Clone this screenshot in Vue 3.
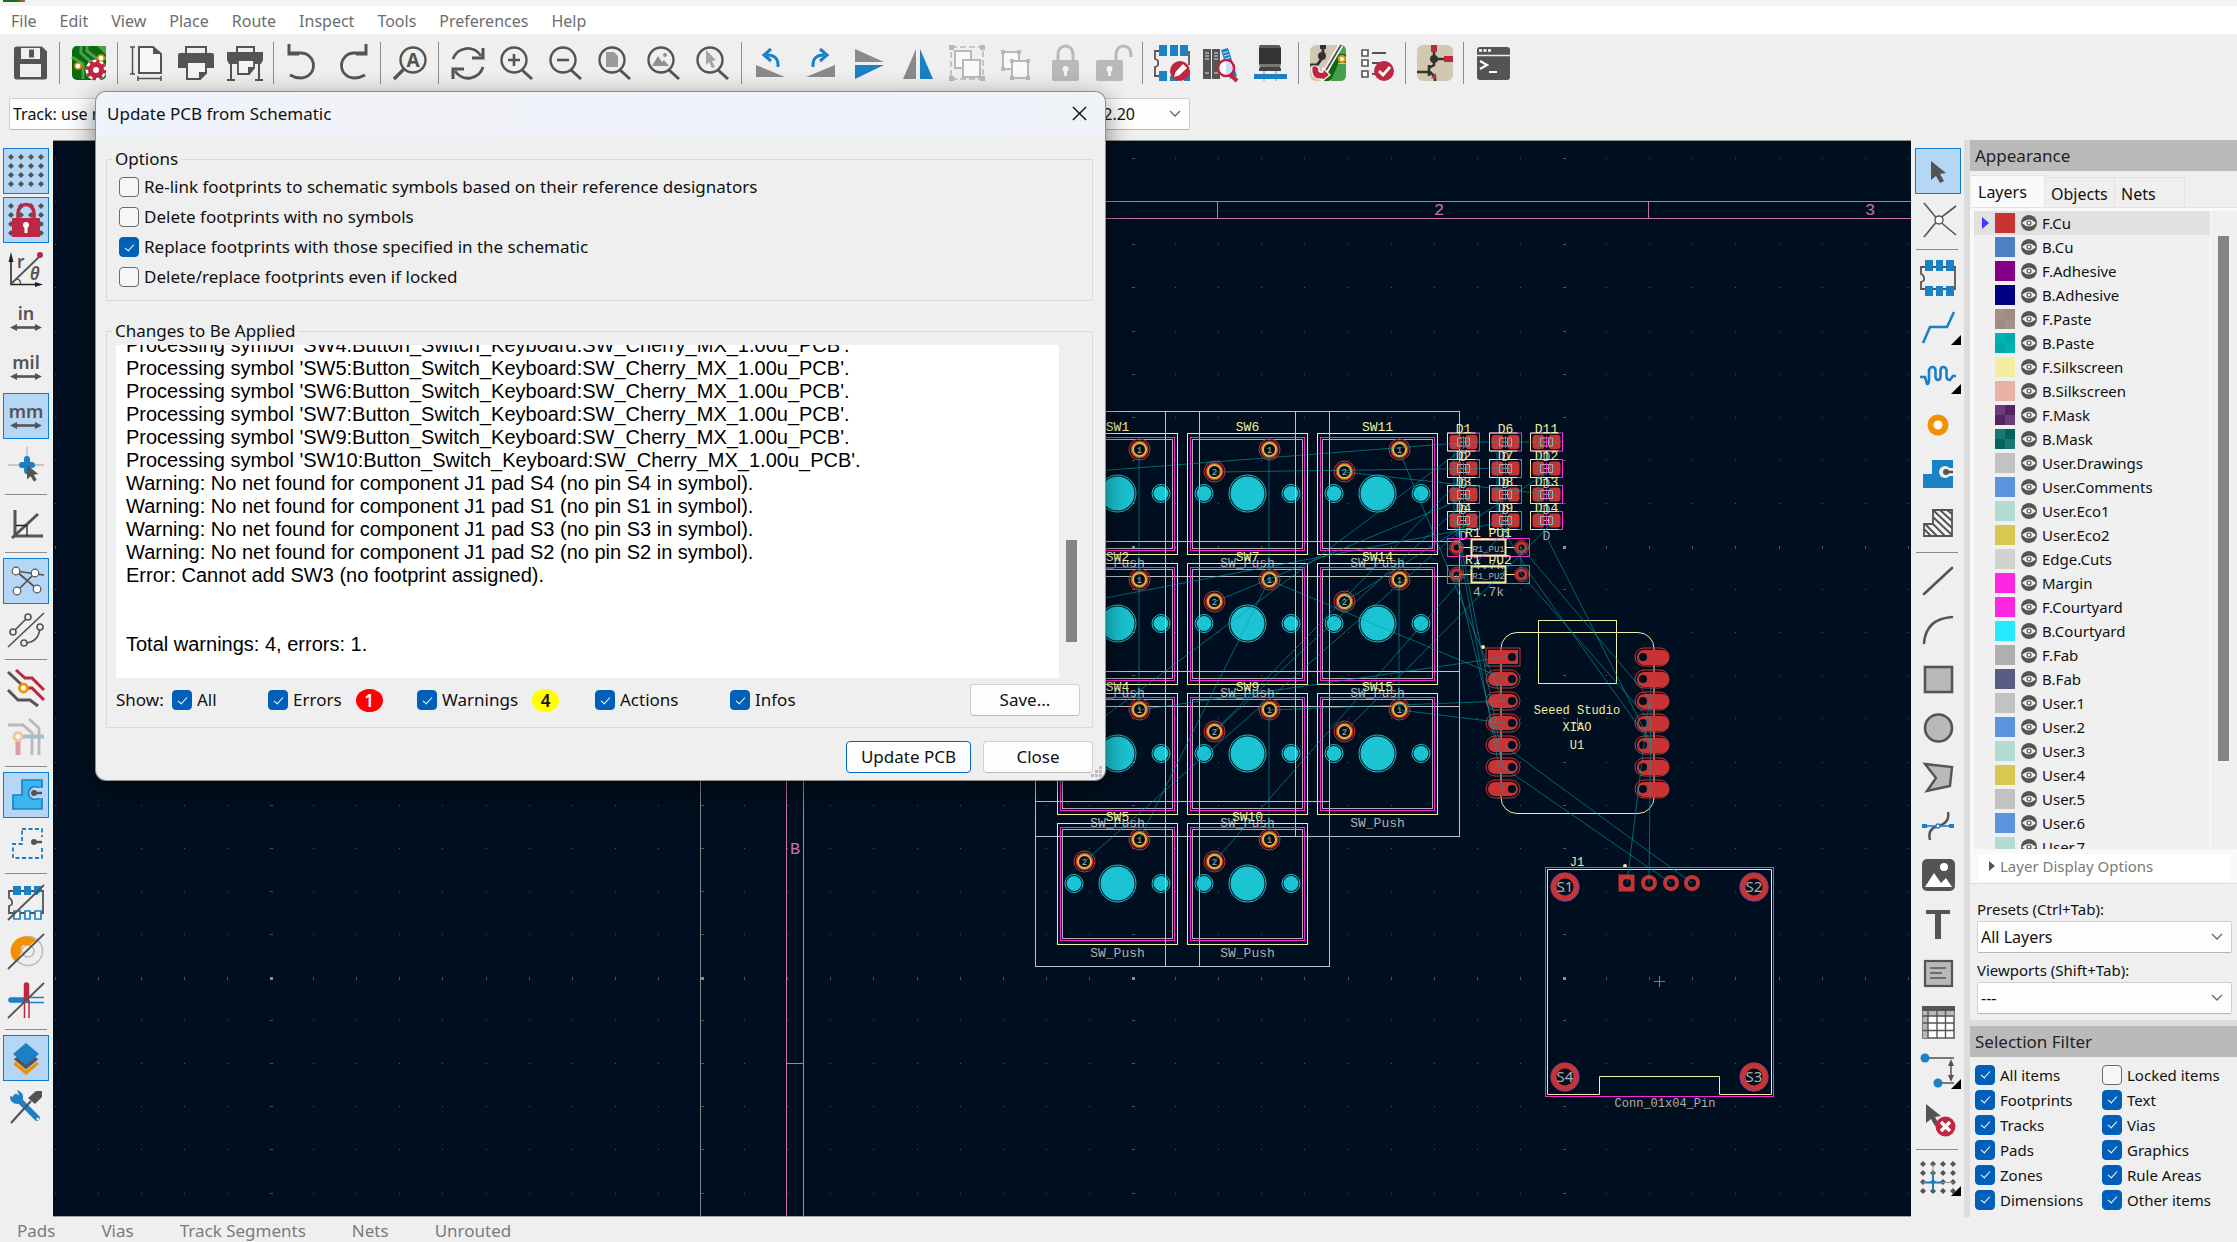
<script setup>
import { ref } from 'vue'

const D = '#545454', B = '#1a81c4', R = '#bf2641', G = '#b9b9b9', O = '#f29100'

const lens = (inner) =>
  `<circle cx="15" cy="15" r="12.500" fill="none" stroke="${D}" stroke-width="2.400"/><path d="M23 25L33 34" stroke="${D}" stroke-width="3"/>${inner}`
const dots = [3, 13, 23, 33].flatMap((x) => [4, 13, 22, 31].map((y) =>
  `<path d="M${x - 3} ${y}L${x} ${y - 3}L${x + 3} ${y}L${x} ${y + 3}Z" fill="${D}"/>`)).join('')
const arrows = `<path d="M2 27.500L9 24V31ZM34 27.500L27 24V31Z" fill="${D}"/><path d="M6 27.500H30" stroke="${D}" stroke-width="2.600"/>`
const unit = (t) => `<text x="18" y="20" text-anchor="middle" font-family="Noto Sans, sans-serif" font-weight="600" font-size="18" fill="${D}">${t}</text>${arrows}`
const chip = `<path d="M1 7H35V29H1V22Q5 21 4 18Q4 15 1 14Z" fill="none" stroke="${D}" stroke-width="1.800"/>`
const strike = `<path d="M0 36L36 1" stroke="${D}" stroke-width="1.800"/>`
const zoneShape = 'M12 4H33V32H3V18H12Z'
const cursor = (x, y) => `<path transform="translate(${x} ${y})" d="M0 0L15 12L9 13L13 20L9 22L5 15L0 19Z" fill="${D}"/>`
const corner = '<path d="M31 36H41V26Z" fill="#000"/>'

const icons = {
  save: `<path d="M1 4Q1 1.500 3.500 1.500H29L34 6.500V32Q34 34.500 31.500 34.500H3.500Q1 34.500 1 32Z" fill="${D}"/><path d="M8 3H27V14H8ZM7 19H28V32H7Z" fill="#efefef"/><path d="M16 4.500H21V12.500H16Z" fill="${D}"/>`,
  board: `<rect x="1" y="1" width="34" height="34" rx="5" fill="#0a6b0d"/><path d="M10 1V8L20 17V26M16 1V6L25 13H35M1 12L12 19V34" fill="none" stroke="#48a04c" stroke-width="3"/><path d="M26 1H35V10Z" fill="#48a04c"/><circle cx="7" cy="21" r="3" fill="#fff" stroke="${O}" stroke-width="1.500"/><circle cx="30" cy="13" r="3" fill="#fff" stroke="${O}" stroke-width="1.500"/><circle cx="25" cy="25" r="10.500" fill="#fff"/><circle cx="25" cy="25" r="5.500" fill="none" stroke="${R}" stroke-width="5"/><circle cx="25" cy="25" r="8.500" fill="none" stroke="${R}" stroke-width="3.500" stroke-dasharray="3.400 3.275"/>`,
  page: `<path d="M10 2H24L32 9V28H10Z" fill="#f6f6f6" stroke="${D}" stroke-width="2"/><path d="M24 2V9H32Z" fill="${D}"/><path d="M1 2H6M1 29H6M3.500 2V29M9 31V36M32 31V36M9 33.500H32" stroke="${D}" stroke-width="1.500"/>`,
  print: `<path d="M8 2H28V9H8Z" fill="#efefef" stroke="${D}" stroke-width="2"/><path d="M2 8H34Q36 8 36 10V23H28V16H8V23H0V10Q0 8 2 8Z" fill="${D}"/><path d="M9 17H28V28L22 34H9Z" fill="#f4f4f4" stroke="${D}" stroke-width="2"/><path d="M28 27L21 35V27Z" fill="${D}"/>`,
  plot: `<path d="M10 2H27V8H10Z" fill="#efefef" stroke="${D}" stroke-width="2"/><path d="M0 7H36V15L34 19H2L0 15Z" fill="${D}"/><path d="M4 19V34M32 19V34M0 35H8M28 35H36" stroke="${D}" stroke-width="2"/><path d="M11 15H27V23L22 29H11Z" fill="#f4f4f4" stroke="${D}" stroke-width="1.800"/><path d="M27 22L21 30V22Z" fill="${D}"/>`,
  undo: `<path d="M5 8H16A12.500 12.500 0 0 1 16 33Q10 33 5 30" fill="none" stroke="${D}" stroke-width="2.800"/><path d="M4 -1V9H14" fill="none" stroke="${D}" stroke-width="3"/>`,
  redo: `<path d="M31 8H20A12.500 12.500 0 0 0 20 33Q26 33 31 30" fill="none" stroke="${D}" stroke-width="2.800"/><path d="M32 -1V9H22" fill="none" stroke="${D}" stroke-width="3"/>`,
  find: `<circle cx="21" cy="15" r="12.500" fill="none" stroke="${D}" stroke-width="2.400"/><path d="M12 24L2 34" stroke="${D}" stroke-width="3.200"/><text x="21" y="22" text-anchor="middle" font-family="Noto Sans, sans-serif" font-weight="700" font-size="19" fill="${D}">A</text>`,
  refresh: `<path d="M3 14A15.500 15.500 0 0 1 31 11M33 22A15.500 15.500 0 0 1 5 26" fill="none" stroke="${D}" stroke-width="2.800"/><path d="M33 3V13H22M3 34V24H14" fill="none" stroke="${D}" stroke-width="3"/>`,
  zoomin: lens(`<path d="M9 15H21M15 9V21" stroke="${D}" stroke-width="2.600"/>`),
  zoomout: lens(`<path d="M9 15H21" stroke="${D}" stroke-width="2.600"/>`),
  zoomfit: lens('<path d="M9 7H17L21 11V22H9Z" fill="#9b9b9b"/>'),
  zoomobj: lens('<path d="M6 21L12 11L16 17L18 15L23 21Z" fill="#8f8f8f"/><circle cx="19" cy="10" r="2" fill="#8f8f8f"/>'),
  zoomsel: lens('<path d="M11 5L21 15L17 16L20 22L17 23L14 17L11 20Z" fill="#a5a5a5"/>'),
  rotl: `<path d="M3 20L32 32H3Z" fill="#8a8a8a"/><path d="M25 22Q26 10 14 10" fill="none" stroke="${B}" stroke-width="3"/><path d="M18 4L11 10L18 16" fill="none" stroke="${B}" stroke-width="3"/>`,
  rotr: `<path d="M33 20L4 32H33Z" fill="#8a8a8a"/><path d="M11 22Q10 10 22 10" fill="none" stroke="${B}" stroke-width="3"/><path d="M18 4L25 10L18 16" fill="none" stroke="${B}" stroke-width="3"/>`,
  flipv: `<path d="M4 4L33 17H4Z" fill="#8a8a8a"/><path d="M4 20H33L4 34Z" fill="${B}"/>`,
  fliph: `<path d="M16 4V34H3Z" fill="#8a8a8a"/><path d="M20 4V34H33Z" fill="${B}"/>`,
  group: `<rect x="2" y="2" width="32" height="32" fill="none" stroke="${G}" stroke-width="1.500" stroke-dasharray="6 3"/><path d="M0 0H5V5H0ZM31 0H36V5H31ZM0 31H5V36H0ZM31 31H36V36H31Z" fill="${G}"/><rect x="6" y="6" width="16" height="17" fill="#fafafa" stroke="${G}" stroke-width="2"/><rect x="14" y="15" width="17" height="17" fill="#fafafa" stroke="${G}" stroke-width="2"/>`,
  ungroup: `<g stroke="${G}" stroke-width="2" fill="#fafafa"><rect x="5" y="7" width="16" height="17"/><rect x="14" y="16" width="16" height="17"/></g><path d="M3 5H7V9H3ZM19 5H23V9H19ZM3 22H7V26H3ZM12 14H16V18H12ZM28 14H32V18H28ZM12 31H16V35H12ZM28 31H32V35H28Z" fill="${G}"/>`,
  lock: `<path d="M11 17V9A7.500 8 0 0 1 26 9V17" fill="none" stroke="${G}" stroke-width="3"/><rect x="5" y="15" width="27" height="21" rx="2" fill="${G}"/><circle cx="18.500" cy="24" r="3" fill="#f2f2f2"/><path d="M17 25H20V31H17Z" fill="#f2f2f2"/>`,
  unlock: `<path d="M20 17V9A7.500 8 0 0 1 35 9V12" fill="none" stroke="${G}" stroke-width="3"/><rect x="0" y="15" width="27" height="21" rx="2" fill="${G}"/><circle cx="13.500" cy="24" r="3" fill="#f2f2f2"/><path d="M12 25H15V31H12Z" fill="#f2f2f2"/>`,
  fpedit: `<path d="M5 6H1V14Q5 15 4 18Q5 21 1 22V31H5M35 6V20" fill="none" stroke="${D}" stroke-width="1.800"/><path d="M5 0H13V11H5ZM16 0H24V11H16ZM26 0H34V11H26ZM5 26H13V36H5ZM16 31H24V36H16ZM30 26H36V36H30Z" fill="${B}"/><circle cx="26" cy="26" r="10" fill="${R}"/><path d="M20 32L21.500 27L29 19L33 23L25 30.500Z" fill="#fff"/>`,
  fplib: `<path d="M0 4H8V34H0ZM9 4H17V34H9Z" fill="${D}"/><path d="M2 8H6M2 11H6M2 14H6M2 28H6M11 8H15M11 11H15M11 14H15M11 28H15" stroke="#ddd" stroke-width="1.200"/><path d="M18 5L25 3L34 31L27 34Z" fill="${B}"/><path d="M20 8L25 6.500M21 11L26 9.500M22 14L27 12.500" stroke="#cfe6f5" stroke-width="1"/><path d="M28 30L34 36" stroke="${R}" stroke-width="4"/><circle cx="23" cy="23" r="8" fill="#fff" stroke="${R}" stroke-width="2.600"/><path d="M23 17V29A6 6 0 0 0 23 17Z" fill="#c5dff0"/>`,
  view3d: `<path d="M8 0H27L29 3V19H7V3Z" fill="#333"/><path d="M7 3L8 0H27L29 3Z" fill="#5a5a5a"/><path d="M7 19H29L28 23H8Z" fill="#777"/><path d="M8 22H28L29 24V26H7V24Z" fill="#444"/><path d="M12 26V30M24 26V30M12 34V36M24 34V36" stroke="#b9b9b9" stroke-width="1.800"/><path d="M2 29H35V34H2Z" fill="${B}"/>`,
  update: `<rect x="0" y="0" width="36" height="36" rx="6" fill="#d2c7b1"/><path d="M30 3Q36 4 36 8V18H28V22L22 34L19 36H14Z" fill="#0a6b0d"/><path d="M32 0Q36 1 36 6V9H27ZM36 19V30Q36 36 30 36H21L26 24L28 19Z" fill="#48a04c"/><path d="M13 0V10M0 20H7L13 12" fill="none" stroke="#333" stroke-width="2.800"/><path d="M10 0H16V4H10Z" fill="#333"/><circle cx="12" cy="11" r="4" fill="#333"/><circle cx="32" cy="14" r="3" fill="#fff" stroke="${O}" stroke-width="2.200"/><path d="M31 0L15 27" stroke="#fff" stroke-width="5"/><path d="M31 0L15 27" stroke="${D}" stroke-width="2"/><path d="M2 21Q0 35 12 34V36L20 30L13 23V27Q8 28 9 24L7 21Z" fill="${R}" stroke="#fff" stroke-width="1.200"/>`,
  drc: `<path d="M3 5H9V11H3ZM3 15H9V21H3ZM3 26H9V32H3Z" fill="#fff" stroke="${D}" stroke-width="1.600"/><path d="M13 8H27M13 18H20M13 29H16" stroke="${D}" stroke-width="1.800"/><circle cx="25" cy="26" r="10" fill="${R}"/><path d="M20 26L24 30L31 22" fill="none" stroke="#fff" stroke-width="2.800"/>`,
  schem: `<rect x="0" y="0" width="36" height="36" rx="6" fill="#d2c7b1"/><path d="M17 6V14H28M17 14V20L12 23V27H0M12 20V31M12 26L18 32V36" fill="none" stroke="#333" stroke-width="2.600"/><circle cx="17" cy="14" r="4" fill="#333"/><path d="M14 0H20V7H14ZM27 11H36V17H27ZM14 33L19 28V34Z" fill="${R}"/>`,
  console: `<rect x="2" y="2" width="33" height="33" rx="3" fill="${D}"/><path d="M2 10.500H35" stroke="#efefef" stroke-width="1.400"/><path d="M4 5.500H16" stroke="#fff" stroke-width="2.400" stroke-dasharray="3 1.500"/><path d="M5 16L12 20L5 24M14 27H22" fill="none" stroke="#fff" stroke-width="2.200"/>`,
  grid: dots,
  gridlock: `${dots}<path d="M10 18V11A8 8.500 0 0 1 26 11V18" fill="none" stroke="${R}" stroke-width="3.500"/><rect x="4" y="16" width="28" height="19" rx="1" fill="${R}"/><circle cx="18" cy="23" r="3" fill="#fff"/><path d="M16.500 24H19.500V31H16.500Z" fill="#fff"/>`,
  polar: `<path d="M3 5V33.500H31" fill="none" stroke="#222" stroke-width="1.500"/><path d="M3 1L5.500 11H0.500ZM35 33.500L27 31V36Z" fill="#222"/><path d="M3 33L31 6" stroke="${D}" stroke-width="1.800"/><path d="M9 28Q13 29 12.500 33" fill="none" stroke="${D}" stroke-width="1.300"/><circle cx="32" cy="4" r="3" fill="${R}"/><text x="9" y="17" font-family="Noto Sans, sans-serif" font-weight="600" font-size="17" fill="${D}">r</text><text x="22" y="29" font-family="Noto Sans, sans-serif" font-style="italic" font-weight="600" font-size="17" fill="${D}">θ</text>`,
  inch: unit('in'), mil: unit('mil'), mm: unit('mm'),
  cross: `<path d="M0 18H36M19 0V18" stroke="${G}" stroke-width="1.300"/><path d="M14 18H24M19 12V24" stroke="${B}" stroke-width="6" stroke-linecap="round"/><path transform="translate(19 18) scale(.75)" d="M0 0L15 12L9 13L13 20L9 22L5 15L0 19Z" fill="${D}"/>`,
  angle: `<path d="M7 5V31H35" fill="none" stroke="${D}" stroke-width="3"/><path d="M4 33L30 9" stroke="${D}" stroke-width="3"/><path d="M8 20.500H19V31" fill="none" stroke="#222" stroke-width="1.300"/>`,
  rats: `<path d="M8 8L28 11L36 12M8 8L29 26M27 10L9 28" stroke="${D}" stroke-width="1.700" fill="none"/><g fill="#fff" stroke="${D}" stroke-width="1.200"><circle cx="8" cy="8" r="3.800"/><circle cx="27" cy="10" r="3.800"/><circle cx="29" cy="26" r="3.800"/><circle cx="9" cy="28" r="3.800"/></g>`,
  curved: `<path d="M0 35L36 1M5 20L20 5M32 15Q31 31 16 31" fill="none" stroke="${D}" stroke-width="1.700"/><g fill="#efefef" stroke="${D}" stroke-width="1.600"><circle cx="5" cy="20" r="3"/><circle cx="20" cy="5" r="3"/><circle cx="32" cy="15" r="3"/><circle cx="16" cy="31" r="3"/></g>`,
  tracks: `<path d="M0 2L15 16M0 20L10 30H22L30 36" fill="none" stroke="${D}" stroke-width="3"/><path d="M8 0L17 8H24L36 20M17 18H24L36 30" fill="none" stroke="${R}" stroke-width="3"/><circle cx="15.500" cy="18" r="4" fill="#fff" stroke="${O}" stroke-width="2.800"/>`,
  dimtracks: `<g opacity=".4"><path d="M10 20V36" stroke="${R}" stroke-width="5"/><path d="M12 17.500H36" stroke="${B}" stroke-width="4"/><circle cx="10" cy="17.500" r="4" fill="#fff" stroke="${O}" stroke-width="2.800"/></g><path d="M0 6H15L24 14V36M21 0L31 9V36" fill="none" stroke="${G}" stroke-width="2.800"/>`,
  zonefill: `<path d="M14 3H34V32H5V18H14Z" fill="#3bb5ee" stroke="${B}" stroke-width="1.700"/><circle cx="27" cy="16" r="6.500" fill="#b5d6f4" stroke="${B}" stroke-width="1.700"/><path d="M28 11H36V21H28Z" fill="#b5d6f4"/><circle cx="26" cy="16" r="3" fill="${D}"/><path d="M26 16H34" stroke="${D}" stroke-width="2.500"/>`,
  zoneline: `<path d="M14 3H34V32H5V18H14Z" fill="none" stroke="${B}" stroke-width="1.800" stroke-dasharray="4 2.500"/><path d="M28 11H36V21H28Z" fill="#efefef"/><circle cx="26" cy="16" r="3" fill="${D}"/><path d="M26 16H34" stroke="${D}" stroke-width="2.500"/>`,
  fpsketch: `${chip}<path d="M5 2H13V11H5ZM16 2H23V11H16ZM26 2H34V6L29 11H26Z" fill="${B}"/><path d="M6 27H12V35H6ZM17 27H22V35H17ZM27 27H33V35H27Z" fill="#fff" stroke="${B}" stroke-width="1.700"/>${strike}`,
  viasketch: `<circle cx="20" cy="18" r="14.500" fill="none" stroke="${G}" stroke-width="1.500"/><circle cx="20" cy="18" r="6" fill="none" stroke="${G}" stroke-width="1.500"/><path d="M8 29A15 14 0 1 1 28 7L22 12H15Q13 13 13 20Z" fill="${O}"/>${strike}`,
  tracksketch: `<path d="M3 18H18" stroke="${B}" stroke-width="5.500" stroke-linecap="round"/><path d="M20 15.500H36M18 20.500H36" stroke="${B}" stroke-width="1.500"/><path d="M18.500 3V17" stroke="${R}" stroke-width="5.500" stroke-linecap="round"/><path d="M16.500 18V36M21 18V36" stroke="${R}" stroke-width="1.500"/>${strike}`,
  layers: `<path d="M5 24L18 35L31 24L18 15Z" fill="${O}"/><path d="M5 19L18 30L31 19L18 11Z" fill="${D}" stroke="#b5d6f4" stroke-width="1"/><path d="M5 14L18 25L31 14L18 3Z" fill="${B}"/>`,
  tools: `<path d="M8 8L29 29" stroke="${B}" stroke-width="6" stroke-linecap="round"/><path d="M2 7Q2 15 10 15L15 11Q16 3 9 1L11 6L8 9L5 8Z" fill="${B}"/><circle cx="30" cy="30" r="1.500" fill="#efefef"/><path d="M3 34L23 12" stroke="${D}" stroke-width="2.200"/><path d="M20 9L28 2L34 2V8L27 15Z" fill="${D}"/>`,
  select: cursor(11, 8),
  net: `<path d="M4 1L18 18L36 4M18 18L36 33M18 18L4 35" fill="none" stroke="${D}" stroke-width="1.600"/><circle cx="19" cy="18" r="4" fill="#fff" stroke="${D}" stroke-width="1.400"/>`,
  fpadd: `${chip}<path d="M5 0H13V11H5ZM16 0H23V11H16ZM26 0H34V11H26ZM5 26H13V36H5ZM16 26H23V36H16ZM26 26H34V36H26Z" fill="${B}"/>`,
  route: `<path d="M3 34L10 18H27L34 3" fill="none" stroke="${B}" stroke-width="2.600"/>${corner}`,
  tune: `<path d="M0 19H5L7 26Q9 26 9 22V12Q10 9 12.500 9Q15 9 15.500 12V19Q16 22 18 22Q20 22 20.500 19V12Q21 9 23 9Q26 9 26.500 12V19Q27 22 30 22L33 18H36" fill="none" stroke="${B}" stroke-width="2.600"/>${corner}`,
  via: `<circle cx="18" cy="18" r="7.500" fill="#fff" stroke="${O}" stroke-width="6"/>`,
  zone: `<path d="${zoneShape}" fill="${B}"/><circle cx="25" cy="16" r="6" fill="#efefef"/><path d="M25 12H34V20H25Z" fill="#efefef"/><circle cx="26" cy="16" r="3" fill="${D}"/><path d="M26 16H33" stroke="${D}" stroke-width="2.500"/>`,
  rule: `<path d="M13 5H32V31H4V19H13Z" fill="#f4f4f4" stroke="${D}" stroke-width="1.800"/><path d="M4 24L11 31M5 19L17 31M13 19L25 31M13 12L32 30M13 5L32 23M20 5L32 16M27 5L32 9" stroke="${D}" stroke-width="2"/>`,
  line: `<path d="M4 31L32 5" stroke="${D}" stroke-width="2.600" stroke-linecap="round"/>`,
  arc: `<path d="M4 31Q6 7 32 5" fill="none" stroke="${D}" stroke-width="2.600" stroke-linecap="round"/>`,
  rect: `<rect x="5" y="6" width="27" height="25" fill="${G}" stroke="${D}" stroke-width="2.600"/>`,
  circle: `<circle cx="18.500" cy="18" r="13.500" fill="${G}" stroke="${D}" stroke-width="2.600"/>`,
  poly: `<path d="M5 5L32 8L30 27L7 32L16 19Z" fill="${G}" stroke="${D}" stroke-width="2.400"/>`,
  bezier: `<path d="M10 32Q7 21 18 18Q30 15 28 4" fill="none" stroke="${D}" stroke-width="2.400"/><path d="M4 18H32" stroke="${B}" stroke-width="1.600"/><path d="M2 16H7V20H2ZM29 16H34V20H29Z" fill="${B}"/><circle cx="18" cy="18" r="2" fill="#fff" stroke="${B}" stroke-width="1.300"/>`,
  image: `<rect x="2" y="2" width="33" height="32" rx="5" fill="${D}"/><path d="M5 30L14 16L21 26L26 21L32 30Z" fill="#fff"/><circle cx="24" cy="10" r="4" fill="#fff"/>`,
  text: `<path d="M6 4H30V8H21V33H15V8H6Z" fill="${D}"/>`,
  textbox: `<rect x="5" y="6" width="27" height="25" fill="${G}" stroke="${D}" stroke-width="2.200"/><path d="M10 13H26M10 18H22M10 23H26" stroke="${D}" stroke-width="1.600"/>`,
  table: `<rect x="3" y="3" width="31" height="31" fill="#fff" stroke="${D}" stroke-width="1.500"/><path d="M3 7H34V12H3ZM3 12H8V34H3Z" fill="${G}"/><path d="M3 12H34M3 19H34M3 26.500H34M8 7V34M17 7V34M25.500 7V34" stroke="${D}" stroke-width="1.400"/><path d="M2 2H35V7H2Z" fill="${D}"/>`,
  dim: `<path d="M5 5H34M18 30H34" stroke="${D}" stroke-width="1.500"/><path d="M31 9V27" stroke="${D}" stroke-width="1.500"/><path d="M31 6L34 13H28ZM31 29L34 22H28Z" fill="${D}"/><circle cx="5" cy="5" r="4.500" fill="${B}"/><circle cx="18" cy="30" r="4.500" fill="${B}"/>${corner}`,
  remove: `${cursor(6, 2)}<circle cx="25.500" cy="24.500" r="10" fill="${R}"/><path d="M21 20L30 29M30 20L21 29" stroke="#fff" stroke-width="3.500"/>`,
  origin: `${dots}<path d="M3 22.500H33M13 4V22" stroke="#999" stroke-width="1"/><path d="M5 22.500H22M13 14V31" stroke="${B}" stroke-width="2"/>${corner}`
}

const menus = ['File', 'Edit', 'View', 'Place', 'Route', 'Inspect', 'Tools', 'Preferences', 'Help']
const split = (s) => s.split(' ').map((name, i) => ({ key: i, name: name.replace('*', ''), on: name.endsWith('*'), sep: name === '|' }))
const topTools = split('save | board | page print plot | undo redo | find | refresh zoomin zoomout zoomfit zoomobj zoomsel | rotl rotr flipv fliph group ungroup lock unlock | fpedit fplib view3d | update drc | schem | console')
const leftTools = split('grid* gridlock* polar inch mil mm* cross | angle | rats* curved | tracks dimtracks | zonefill* zoneline | fpsketch viasketch tracksketch | layers* tools')
const rightTools = split('select* net | fpadd route tune via zone rule | line arc rect circle poly bezier image text textbox table dim remove | origin')

const layers = [
  ['F.Cu', '#c83434'], ['B.Cu', '#4d7fc4'], ['F.Adhesive', '#840084'], ['B.Adhesive', '#000084'],
  ['F.Paste', '#a59189', '#a08b82'], ['B.Paste', '#00b4b4', '#00aaaa'], ['F.Silkscreen', '#f2eda1'], ['B.Silkscreen', '#e8b2a7'],
  ['F.Mask', '#6d3b7b', '#54245f'], ['B.Mask', '#177a72', '#02645c'], ['User.Drawings', '#c2c2c2'], ['User.Comments', '#5994dc'],
  ['User.Eco1', '#b4dbd2'], ['User.Eco2', '#d8c852'], ['Edge.Cuts', '#d0d2cd'], ['Margin', '#ff26e2'],
  ['F.Courtyard', '#ff26e2'], ['B.Courtyard', '#26e9ff'], ['F.Fab', '#afafaf'], ['B.Fab', '#585d84'],
  ['User.1', '#c2c2c2'], ['User.2', '#5994dc'], ['User.3', '#b4dbd2'], ['User.4', '#d8c852'],
  ['User.5', '#c2c2c2'], ['User.6', '#5994dc'], ['User.7', '#b4dbd2']
].map(([name, color, alt]) => ({ name, color, alt: alt || color }))

const filters = ref([
  ['All items', true], ['Locked items', false], ['Footprints', true], ['Text', true], ['Tracks', true], ['Vias', true],
  ['Pads', true], ['Graphics', true], ['Zones', true], ['Rule Areas', true], ['Dimensions', true], ['Other items', true]
].map(([label, on]) => ({ label, on })))

const options = ref([
  { label: 'Re-link footprints to schematic symbols based on their reference designators', on: false },
  { label: 'Delete footprints with no symbols', on: false },
  { label: 'Replace footprints with those specified in the schematic', on: true },
  { label: 'Delete/replace footprints even if locked', on: false }
])
const shows = ref([
  { label: 'All', on: true }, { label: 'Errors', on: true, count: 1, kind: 'err' },
  { label: 'Warnings', on: true, count: 4, kind: 'warn' }, { label: 'Actions', on: true }, { label: 'Infos', on: true }
])
const log = [
  ...[4, 5, 6, 7, 9, 10].map((n) => `Processing symbol 'SW${n}:Button_Switch_Keyboard:SW_Cherry_MX_1.00u_PCB'.`),
  ...[4, 1, 3, 2].map((n) => `Warning: No net found for component J1 pad S${n} (no pin S${n} in symbol).`),
  'Error: Cannot add SW3 (no footprint assigned).', '', '', 'Total warnings: 4, errors: 1.'
]

/* board contents, in canvas units */
const cols = [1117.5, 1247.5, 1377.5], rows = [493.5, 623.5, 753.5, 883.5]
const switches = [
  ['SW1', 0, 0], ['SW6', 1, 0], ['SW11', 2, 0], ['SW2', 0, 1], ['SW7', 1, 1], ['SW14', 2, 1],
  ['SW4', 0, 2], ['SW9', 1, 2], ['SW15', 2, 2], ['SW5', 0, 3], ['SW10', 1, 3]
].map(([name, c, r]) => ({ name, x: cols[c], y: rows[r] }))
const diodes = [1463.5, 1505.5, 1546.5].flatMap((x, c) => [442, 468.5, 494.5, 520.5].map((y, r) => ({ name: 'D' + (c * 5 + r + 1), x, y })))
const resistors = [{ name: 'R1_PU1', y: 547.5 }, { name: 'R1_PU2', y: 574.5 }]
const pins = [657, 679, 701, 723, 745, 767, 789]
const gridDots = []
for (let i = -15; i <= 28; i++) {
  for (let j = -19; j <= 5; j++) {
    const mx = i % 10 === 0, my = j % 10 === 0
    gridDots.push({ x: Math.round(701 + i * 43.1), y: Math.round(977 + j * 43.1), w: mx ? 3 : 1, h: my ? 3 : 1, c: mx && my ? '#8c8f93' : '#50565e' })
  }
}
const nets = [
  'M1139 450V710', 'M1269 450V580', 'M1269 710V840', 'M1399 580V710',
  'M1084 472L1472 442', 'M1214 472L1514 468', 'M1344 472L1555 495',
  'M1084 602L1514 520', 'M1214 602L1472 495', 'M1344 602L1555 468', 'M1084 732L1472 442',
  'M1214 732L1472 495', 'M1214 732L1472 468', 'M1084 862L1472 520', 'M1214 862L1514 520', 'M1344 732L1555 520',
  'M1269 580L1505 679', 'M1139 840L1269 580', 'M1139 710L1505 657', 'M1269 710L1505 701', 'M1399 710L1505 723',
  'M1399 450L1503 701', 'M1454 442V520L1503 789', 'M1456 520L1500 745', 'M1456 574L1503 767',
  'M1497 442V520L1530 574L1652 745', 'M1538 442V520L1652 745', 'M1521 547V574L1652 723', 'M1521 547L1652 701',
  'M1472 442L1563 442', 'M1503 745L1692 883', 'M1503 767L1671 883', 'M1652 679L1627 883', 'M1651 701L1649 883'
]
const standoffs = [['S1', 1565, 887], ['S2', 1754, 887], ['S3', 1754, 1077], ['S4', 1565, 1077]]
</script>

<template>
  <div class="app">
    <div class="titlebar"><span class="appmark"></span></div>
    <nav class="menubar"><a v-for="m in menus" :key="m" href="#">{{ m }}</a></nav>

    <div class="toolbar">
      <template v-for="t in topTools" :key="t.key">
        <span v-if="t.sep" class="vsep"></span>
        <button v-else class="tool wide" :aria-label="t.name"><svg viewBox="0 0 36 36" v-html="icons[t.name]"></svg></button>
      </template>
    </div>
    <div class="toolbar second">
      <select class="combo track" aria-label="Track width"><option>Track: use netclass width</option></select>
      <button class="toggle" aria-label="Automatic width"></button>
      <span class="grow"></span>
      <select class="combo zoom" aria-label="Zoom"><option>Zoom 2.20</option></select>
    </div>

    <div class="body">
      <div class="side">
        <template v-for="t in leftTools" :key="t.key">
          <span v-if="t.sep" class="hsep"></span>
          <span v-else class="slot"><button class="tool" :class="{ on: t.on }" :aria-label="t.name"><svg viewBox="0 0 36 36" v-html="icons[t.name]"></svg></button></span>
        </template>
      </div>

      <main class="canvas">
        <svg class="board" viewBox="53 140 1858 1077" preserveAspectRatio="xMidYMid slice">
          <rect v-for="(d, i) in gridDots" :key="'g' + i" :x="d.x" :y="d.y" :width="d.w" :height="d.h" :fill="d.c" />
          <path d="M700.500 140V1217" class="page-edge" />
          <path d="M786.500 1217V201.500H1911M803.500 1217V218.500H1911M786.500 1063.500H803.500M1217.500 201V218M1648.500 201V218" class="sheet" />
          <g class="sheet-text"><text x="1439" y="215">2</text><text x="1870" y="215">3</text><text x="795" y="854">B</text></g>

          <g v-for="s in switches" :key="s.name" :transform="`translate(${s.x} ${s.y})`">
            <rect x="-82" y="-82" width="164" height="165" class="dwg" />
            <rect x="-60" y="-60" width="120" height="121" class="silk" />
            <rect x="-57" y="-56" width="114" height="113" class="court" />
            <rect x="-55" y="-54" width="110" height="109" class="fab" />
            <circle r="18.500" class="hole-ring" /><circle r="17" class="hole" />
            <circle cx="-43.500" r="9" class="hole-ring" /><circle cx="-43.500" r="7.500" class="hole" />
            <circle cx="43.500" r="9" class="hole-ring" /><circle cx="43.500" r="7.500" class="hole" />
            <g v-for="(p, i) in [[22, -44], [-33, -22]]" :key="i" :transform="`translate(${p[0]} ${p[1]})`">
              <circle r="10.500" class="pad-ring" /><circle r="9" class="pad" /><circle r="6.500" class="drill" />
              <text y="3" class="fabtext small">{{ i + 1 }}</text>
            </g>
            <text y="-63" class="silktext">{{ s.name }}</text>
            <text y="73" class="fabtext">SW_Push</text>
          </g>

          <g v-for="d in diodes" :key="d.name" :transform="`translate(${d.x} ${d.y})`">
            <rect x="-16" y="-9" width="32" height="18" class="court" />
            <path d="M12 -9H-16V9H12" class="silk" />
            <rect x="-14" y="-7" width="12" height="14" rx="3" class="pad" /><rect x="2" y="-7" width="12" height="14" rx="3" class="pad" />
            <path d="M-6 -4H6V4H-6ZM-3 0H3M2 -3V3" class="fab" /><path d="M0 -6V6" class="court" />
            <text y="-9" class="silktext">{{ d.name }}</text>
            <text y="19" class="fabtext">D</text>
          </g>

          <g v-for="r in resistors" :key="r.name" :transform="`translate(1488.500 ${r.y})`">
            <rect x="-41" y="-9" width="82" height="18" class="court" />
            <path d="M-27 0H-17M17 0H27" class="silk" />
            <rect x="-17" y="-8" width="34" height="16" class="silk thick" />
            <circle v-for="x in [-32, 33]" :key="x" :cx="x" r="7" class="pad-ring" />
            <circle v-for="x in [-32, 33]" :key="'p' + x" :cx="x" r="4.500" class="pad-annulus" />
            <text y="4" class="fabtext small">{{ r.name }}</text>
            <text y="-11" class="silktext">{{ r.name }}</text>
            <text y="21" class="fabtext">4.7k</text>
          </g>

          <rect x="1501" y="632.500" width="153" height="181" rx="16" class="silk" />
          <rect x="1538.500" y="620.500" width="78" height="63" class="silk" />
          <g v-for="(y, i) in pins" :key="y">
            <rect x="1486" :y="y - 9" width="34" height="18" :rx="i ? 9 : 0" class="pad-ring" />
            <rect x="1488" :y="y - 7" width="30" height="14" :rx="i ? 7 : 0" class="pad" />
            <circle cx="1512" :cy="y" r="4" class="void" />
            <rect x="1635" :y="y - 9" width="34" height="18" rx="9" class="pad-ring" />
            <rect x="1637" :y="y - 7" width="32" height="15" rx="7" class="pad" />
            <circle cx="1643" :cy="y" r="4" class="void" />
          </g>
          <circle cx="1483" cy="647" r="2" class="dot" /><circle cx="1625" cy="866" r="2" class="dot" />
          <path d="M1577.500 718V728M1572 723.500H1583M1659.500 976V987M1654 981.500H1665" class="court" />
          <g class="silktext mid"><text x="1577" y="714">Seeed Studio</text><text x="1577" y="731">XIAO</text><text x="1577" y="749">U1</text><text x="1577" y="866">J1</text></g>

          <rect x="1545.500" y="867.500" width="228" height="229" class="court" />
          <path d="M1547.500 869.500H1771.500V1094.500H1719.500V1076.500H1599.500V1094.500H1547.500Z" class="silk" />
          <g v-for="s in standoffs" :key="s[0]" :transform="`translate(${s[1]} ${s[2]})`">
            <circle r="11.500" class="standoff" /><circle r="14" class="thin" />
            <text y="5" class="fabtext padname">{{ s[0] }}</text>
          </g>
          <rect x="1618.500" y="874.500" width="16" height="17" class="pad" />
          <circle v-for="x in [1649, 1671, 1692]" :key="x" :cx="x" cy="883" r="8" class="pad" />
          <circle v-for="x in [1627, 1649, 1671, 1692]" :key="'v' + x" :cx="x" cy="883" r="4" class="void" />
          <text x="1665" y="1107" class="fabtext mid">Conn_01x04_Pin</text>
          <path v-for="(n, i) in nets" :key="'n' + i" :d="n" class="net" />
        </svg>
      </main>

      <div class="side">
        <template v-for="t in rightTools" :key="t.key">
          <span v-if="t.sep" class="hsep"></span>
          <span v-else class="slot"><button class="tool" :class="{ on: t.on }" :aria-label="t.name"><svg viewBox="0 0 36 36" v-html="icons[t.name]"></svg></button></span>
        </template>
      </div>

      <aside class="panel">
        <h2>Appearance</h2>
        <div class="tabs"><button class="active">Layers</button><button>Objects</button><button>Nets</button></div>
        <div class="layerbox">
          <div class="layerlist">
            <ul>
              <li v-for="(l, i) in layers" :key="l.name" :class="{ current: i === 0 }">
                <span class="mark"></span>
                <span class="swatch" :style="{ '--c': l.color, '--a': l.alt }"></span>
                <svg class="eye" viewBox="0 0 16 16"><circle cx="8" cy="8" r="8" fill="#545454" /><path d="M1 8Q8 1 15 8Q8 15 1 8Z" fill="#f0f0f0" /><circle cx="8" cy="8" r="2" fill="#f0f0f0" stroke="#545454" stroke-width="1.200" /></svg>
                <span>{{ l.name }}</span>
              </li>
            </ul>
            <div class="scroll"><span></span></div>
          </div>
          <button class="collapse"><span class="tri"></span>Layer Display Options</button>
        </div>
        <div class="presets">
          <label for="presets">Presets (Ctrl+Tab):</label>
          <select id="presets" class="combo"><option>All Layers</option></select>
          <label for="viewports">Viewports (Shift+Tab):</label>
          <select id="viewports" class="combo"><option>---</option></select>
        </div>
        <h2 class="ruled">Selection Filter</h2>
        <div class="filters">
          <label v-for="f in filters" :key="f.label"><input v-model="f.on" type="checkbox" />{{ f.label }}</label>
        </div>
      </aside>
    </div>

    <footer class="status"><span>Pads</span><span>Vias</span><span>Track Segments</span><span>Nets</span><span>Unrouted</span></footer>

    <section class="dialog" role="dialog" aria-label="Update PCB from Schematic">
      <header>
        <span>Update PCB from Schematic</span>
        <button class="x" aria-label="Close dialog"><svg viewBox="0 0 16 16"><path d="M1 1L15 15M15 1L1 15" stroke="#111" stroke-width="1.500" /></svg></button>
      </header>
      <div class="content">
        <fieldset>
          <legend>Options</legend>
          <label v-for="o in options" :key="o.label" class="opt"><input v-model="o.on" type="checkbox" />{{ o.label }}</label>
        </fieldset>
        <fieldset class="changes">
          <legend>Changes to Be Applied</legend>
          <div class="logrow">
            <div class="log"><p v-for="(line, i) in log" :key="i">{{ line }}</p></div>
            <div class="logscroll"><span></span></div>
          </div>
          <div class="show">
            <span>Show:</span>
            <div v-for="s in shows" :key="s.label" class="cell">
              <label><input v-model="s.on" type="checkbox" />{{ s.label }}</label>
              <b v-if="s.count" :class="s.kind">{{ s.count }}</b>
            </div>
            <button class="btn">Save...</button>
          </div>
        </fieldset>
        <div class="actions"><button class="btn primary">Update PCB</button><button class="btn">Close</button></div>
      </div>
      <svg class="grip" viewBox="0 0 12 12"><path d="M8 0H11V3H8ZM8 4H11V7H8ZM4 4H7V7H4ZM8 8H11V11H8ZM4 8H7V11H4ZM0 8H3V11H0Z" fill="#bdbdbd" /></svg>
    </section>
  </div>
</template>

<style>
body { margin: 0; background: #f0f0f0; }
</style>

<style scoped>
.app { position: relative; height: 100vh; display: flex; flex-direction: column; overflow: hidden; background: #efefef; color: #111; font: 17px/24px "Noto Sans", "Open Sans", sans-serif; }
.app *, .app *::after { box-sizing: border-box; }
button, select, input { font: inherit; color: inherit; margin: 0; }
button { padding: 0; border: 0; background: none; }
svg { display: block; overflow: visible; }
.titlebar { height: 6px; background: #f3f3f3; }
.appmark { display: block; width: 22px; height: 2px; margin-left: 3px; background: linear-gradient(90deg, #1d6b20 60%, #bf6a26); }
.menubar { height: 28px; display: flex; align-items: center; gap: 23px; padding: 2px 0 0 11px; background: #fff; font-size: 16px; }
.menubar a { color: #6d6d6d; text-decoration: none; }
.toolbar { height: 57px; display: flex; align-items: center; padding-left: 6px; }
.tool { width: 46px; height: 46px; flex: none; display: grid; place-items: center; border: 1px solid transparent; }
.tool.wide { width: 49px; }
.tool svg { width: 36px; height: 36px; }
.tool.on { background: #b5d6f4; border-color: #0a7bd8; }
.vsep { width: 9px; display: flex; justify-content: center; }
.vsep::after { content: ""; width: 1px; height: 42px; background: #8c8c8c; }
.toolbar.second { height: 49px; width: calc(53% + 4px); padding: 0 0 4px 9px; gap: 7px; }
.grow { flex: 1; }
.toggle { width: 46px; height: 45px; background: #b5d6f4; border: 1px solid #0a6ab8; }
.combo { appearance: none; height: 32px; padding: 0 28px 0 3px; border: 1px solid #d0d0d0; border-bottom-color: #b5b5b5; border-radius: 2px; font-size: 16px; background: #fdfdfd url("data:image/svg+xml,%3Csvg xmlns='http://www.w3.org/2000/svg' width='12' height='8'%3E%3Cpath d='M1 1l5 5 5-5' fill='none' stroke='%23666' stroke-width='1.300'/%3E%3C/svg%3E") no-repeat right 8px center; }
.combo.track { width: 225px; }
.combo.zoom { width: 142px; padding-left: 7px; }

.body { flex: 1; min-height: 0; display: flex; }
.side { width: 53px; flex: none; padding-top: 7px; display: flex; flex-direction: column; }
.slot { height: 49px; flex: none; padding: 1px 0 0 3px; }
.side + .panel { min-width: 0; }
.hsep { height: 9px; flex: none; display: flex; align-items: center; padding: 0 6px 0 5px; }
.hsep::after { content: ""; height: 1px; flex: 1; background: #8c8c8c; }
.canvas { flex: 1; min-width: 0; position: relative; background: #000f1f; border-top: 1px solid #8f938f; border-bottom: 1px solid #a0a0a0; overflow: hidden; }
.canvas + .side .slot { padding-left: 4px; }
.board { position: absolute; inset: 0; width: 100%; height: 100%; }

.board text { text-anchor: middle; font-family: "Liberation Mono", monospace; font-size: 13px; }
.page-edge, .dwg { fill: none; stroke: #c2c2c2; }
.page-edge { stroke: #85868a; }
.sheet { fill: none; stroke: #c872a5; }
.sheet-text { fill: #c872a5; }
.sheet-text text { font-size: 17px; }
.silk { fill: none; stroke: #f2eda1; }
.silk.thick { stroke-width: 2; }
.court { fill: none; stroke: #ff26e2; }
.fab { fill: none; stroke: #afafaf; }
.hole { fill: #1ac4d2; }
.hole-ring { fill: none; stroke: #1ac4d2; }
.pad { fill: #c83434; }
.pad-ring { fill: none; stroke: #c83434; stroke-width: 1; }
.pad-annulus { fill: none; stroke: #c83434; stroke-width: 3; }
.drill { fill: #000f1f; stroke: #e3b72e; stroke-width: 2; }
.void { fill: #000f1f; }
.dot { fill: #f2eda1; }
.silktext { fill: #f2eda1; }
.fabtext { fill: #afafaf; }
.board .small { font-size: 9px; }
.board .mid, .board .mid text { font-size: 12px; }
.board .padname { font-family: "Noto Sans", sans-serif; font-size: 15px; }
.standoff { fill: none; stroke: #c83434; stroke-width: 6; }
.thin { fill: none; stroke: #7a3f8c; }
.net { fill: none; stroke: #00a0ad; stroke-opacity: .6; }

.panel { width: 273px; flex: none; display: flex; flex-direction: column; border-left: 6px solid #dcdcdc; }
h2 { margin: 0; height: 31px; flex: none; padding: 3px 5px; background: #bababa; font-size: 17px; font-weight: 400; line-height: 25px; color: #222; }
h2.ruled { height: 37px; border-top: 6px solid #dcdcdc; }
.tabs { height: 37px; flex: none; display: flex; align-items: flex-end; padding-left: 1px; font-size: 16px; border-bottom: 1px solid #e3e3e3; }
.tabs button { width: 70px; height: 30px; padding: 2px 0 0 6px; text-align: left; border: 1px solid #e3e3e3; border-width: 1px 1px 0 0; }
.tabs .active { width: 74px; height: 32px; padding: 0 0 0 7px; background: #fafafa; }
.layerbox { flex: 1; min-height: 0; display: flex; flex-direction: column; padding: 3px 0 2px 4px; background: #f9f9f9; border-bottom: 1px solid #dedede; }
.layerlist { flex: 1; min-height: 0; overflow: hidden; display: flex; background: #f0f0f0; font-size: 15px; }
ul { flex: 1; margin: 0; padding: 0; list-style: none; border-right: 1px solid #fafafa; }
li { height: 24px; display: flex; align-items: center; }
li.current { background: #e1e1e1; }
.mark { width: 21px; padding-left: 8px; }
.current .mark::after { content: ""; display: block; width: 0; border: 6px solid transparent; border-left: 7px solid #3c3cff; border-right: 0; }
.swatch { width: 20px; height: 20px; margin-right: 6px; background: conic-gradient(var(--a) 25%, var(--c) 0 50%, var(--a) 0 75%, var(--c) 0); }
.eye { width: 16px; height: 16px; margin-right: 5px; }
.scroll { width: 26px; padding: 25px 0 88px 7px; display: flex; }
.scroll span { width: 11px; background: #848484; }
.collapse { height: 27px; flex: none; margin: 5px 6px 0 5px; padding: 0 0 3px 10px; display: flex; align-items: center; gap: 5px; background: #fff; color: #7a7a7a; font-size: 15px; }
.tri { border: 5px solid transparent; border-left: 6px solid #555; border-right: 0; }
.presets { flex: none; display: flex; flex-direction: column; padding: 12px 5px 6px 7px; font-size: 15px; }
.presets label { height: 25px; }
.presets .combo { margin: 0 0 4px; }
.presets .combo:last-child { margin-bottom: 0; }
.filters { flex: none; display: grid; grid-template-columns: 127px 1fr; grid-auto-rows: 25px; padding: 5px 0 5px 5px; font-size: 15px; }
label { display: flex; align-items: center; white-space: nowrap; }
input[type="checkbox"] { appearance: none; width: 20px; height: 20px; flex: none; margin-right: 5px; border: 1px solid #6a6a6a; border-radius: 4px; background: #f6f6f6; display: grid; place-items: center; }
input[type="checkbox"]:checked { background: #005fb8; border-color: #005fb8; }
input[type="checkbox"]:checked::after { content: ""; width: 5px; height: 9px; border: solid #fff; border-width: 0 1px 1px 0; transform: translateY(-1px) rotate(42deg); }

.status { height: 25px; flex: none; display: flex; gap: 46px; padding-left: 17px; font-size: 17px; line-height: 28px; color: #7b7b7b; }

.dialog { position: absolute; left: 96px; top: 92px; width: 1009px; border-radius: 10px; background: #efefef; box-shadow: 0 0 0 1px #8f8f8f, 0 8px 26px 2px rgba(0, 0, 0, .45); }
.dialog header { height: 44px; display: flex; align-items: center; justify-content: space-between; padding: 0 18px 1px 11px; border-radius: 10px 10px 0 0; background: linear-gradient(90deg, #eef3fc, #f2f2f8 30%, #edf2fb 70%, #eff3f8); }
.x svg { width: 15px; height: 15px; }
.content { padding: 11px 12px 7px 10px; }
fieldset { margin: 0; padding: 1px 12px 8px; border: 1px solid #dadada; min-width: 0; }
legend { height: 24px; margin-left: -7px; padding: 0 3px; }
.opt { height: 30px; }
.changes { margin-top: 18px; padding: 2px 12px 11px 9px; }
.changes legend { margin-left: -4px; }
.logrow { height: 333px; display: flex; }
.log { flex: 1; overflow: hidden; padding-left: 10px; background: #fff; color: #000; font: 20px/23px "Liberation Sans", Arial, sans-serif; }
.log p { margin: 0; height: 23px; white-space: nowrap; }
.log p:first-child { margin-top: -11px; }
.logscroll { width: 21px; padding: 195px 0 36px 7px; display: flex; }
.logscroll span { width: 11px; background: #848484; }
.show { margin-top: 6px; display: grid; grid-template-columns: 56px 96px 149px 178px 135px 1fr 110px; align-items: center; }
.cell { display: flex; align-items: center; gap: 14px; }
.cell b { width: 27px; height: 23px; border-radius: 50%; text-align: center; line-height: 23px; font-weight: 600; }
.err { background: #f00; color: #fff; }
.warn { background: #ff0; color: #111; }
.btn { width: 110px; height: 32px; border: 1px solid #d0d0d0; border-bottom-color: #bbb; border-radius: 4px; background: #fdfdfd; }
.btn.primary { width: 125px; border-color: #0067c0; }
.actions { display: flex; justify-content: flex-end; gap: 12px; margin-top: 13px; }
.grip { position: absolute; right: 2px; bottom: 2px; width: 12px; height: 12px; }
</style>
